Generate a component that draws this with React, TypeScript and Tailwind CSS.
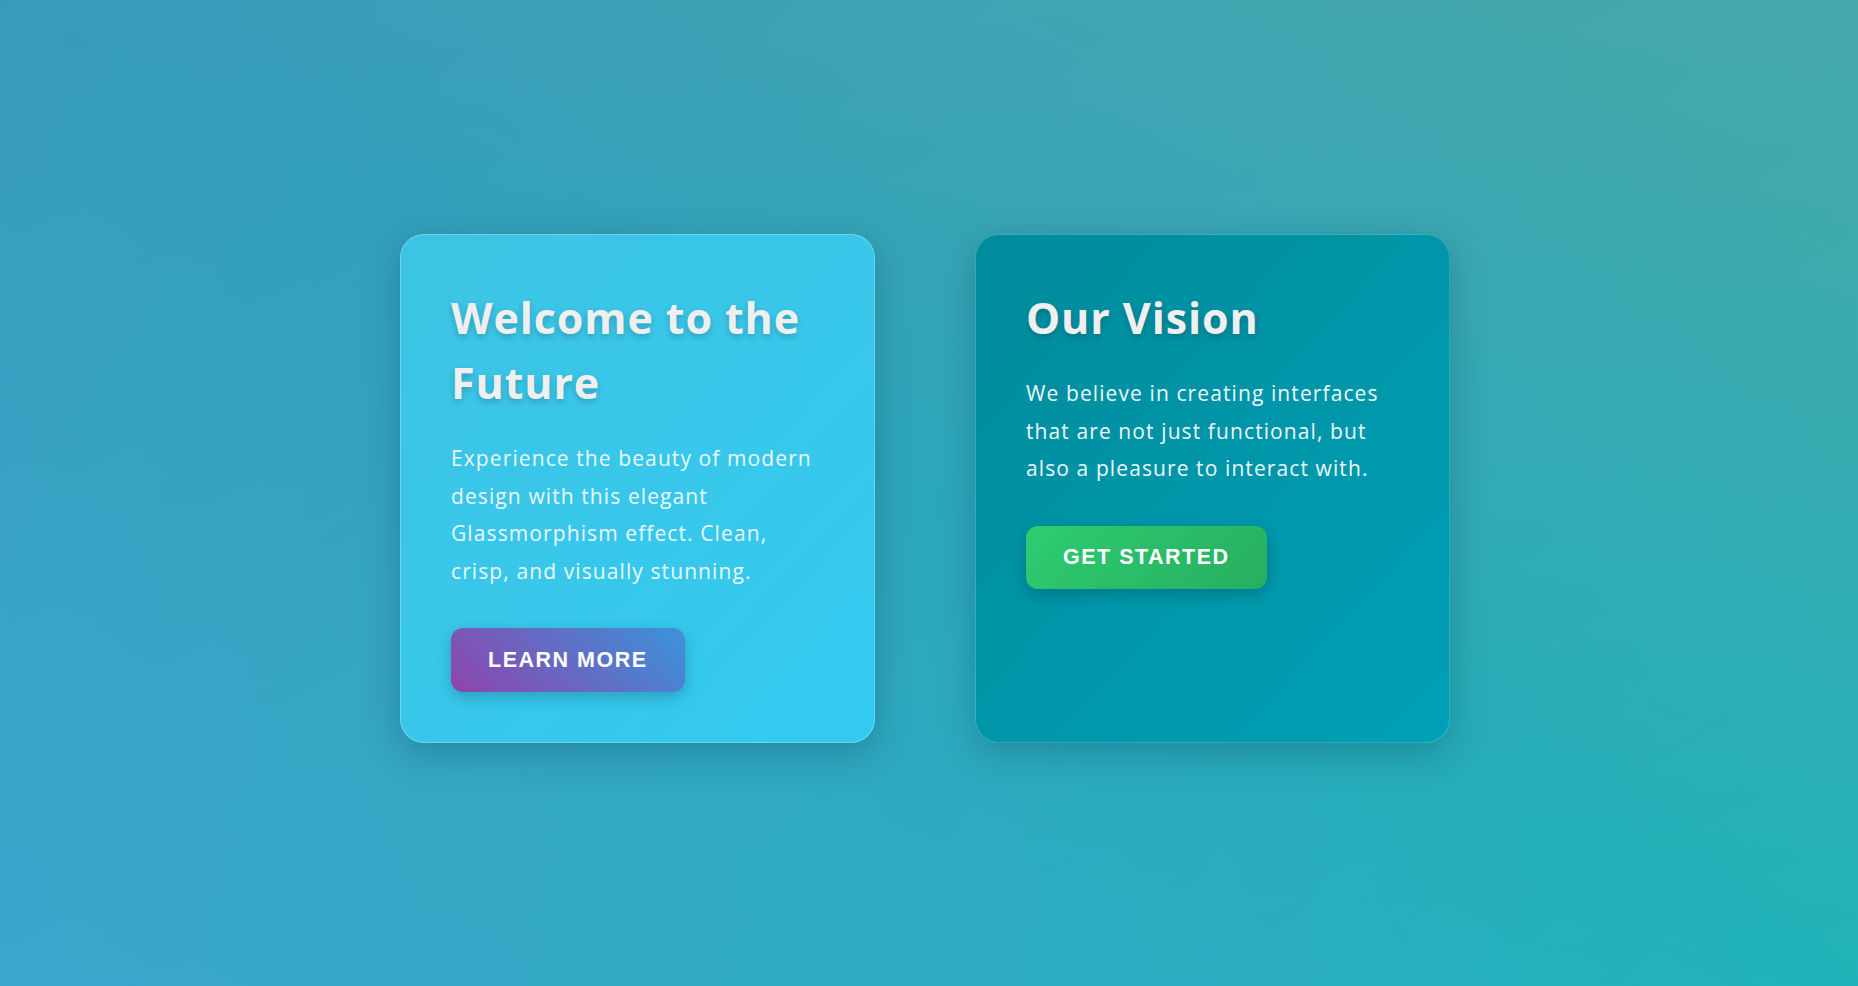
import React from 'react';

const App: React.FC = () => {
  return (
    <div className="min-h-screen w-full flex items-center justify-center bg-[linear-gradient(to_top_right,rgba(94,166,246,0.3),transparent_50%,rgba(134,173,133,0.3)),linear-gradient(to_bottom_right,#389bbc,#20b2b8)] font-['Open_Sans',sans-serif]">
      <div className="flex items-stretch gap-[100px] pb-[9px] pr-[8px]">
        {/* Card 1 */}
        <div className="w-[475px] rounded-[24px] border border-white/25 bg-[linear-gradient(to_bottom_right,#3dc4e4,#33caf0)] p-[50px] shadow-[0_10px_35px_rgba(0,40,70,0.25)]">
          <h1 className="text-[43px] leading-[65px] font-bold tracking-[0.9px] text-[#efefef] [text-shadow:0_3px_6px_rgba(0,0,0,0.2)]">
            Welcome to the Future
          </h1>
          <p className="mt-[25px] text-[21px] leading-[37.5px] tracking-[1.1px] text-[#eaf7fc]">
            Experience the beauty of modern design with this elegant Glassmorphism effect. Clean, crisp, and visually stunning.
          </p>
          <button className="mt-[38px] h-[64px] px-[37px] rounded-[12px] bg-[linear-gradient(45deg,#8e44ad,#3a93da)] text-white font-bold uppercase text-[21.5px] tracking-[1.5px] font-['Liberation_Sans',Arial,sans-serif] shadow-[0_5px_15px_rgba(0,0,0,0.2)]">
            Learn More
          </button>
        </div>

        {/* Card 2 */}
        <div className="w-[475px] rounded-[24px] border border-white/20 bg-[linear-gradient(to_bottom_right,#008b9b,#00a0b6)] p-[50px] shadow-[0_10px_35px_rgba(0,40,70,0.25)]">
          <h1 className="text-[43px] leading-[65px] font-bold tracking-[0.9px] text-[#efefef] [text-shadow:0_3px_6px_rgba(0,0,0,0.2)]">
            Our Vision
          </h1>
          <p className="mt-[25px] text-[21px] leading-[37.5px] tracking-[1.1px] text-[#eaf7fc]">
            We believe in creating interfaces that are not just functional, but also a pleasure to interact with.
          </p>
          <button className="mt-[38px] h-[63px] px-[37px] rounded-[12px] bg-[linear-gradient(135deg,#2ecc71,#27ae60)] text-white font-bold uppercase text-[21.5px] tracking-[1.5px] font-['Liberation_Sans',Arial,sans-serif] shadow-[0_5px_15px_rgba(0,0,0,0.2)]">
            Get Started
          </button>
        </div>
      </div>
    </div>
  );
};

export default App;
